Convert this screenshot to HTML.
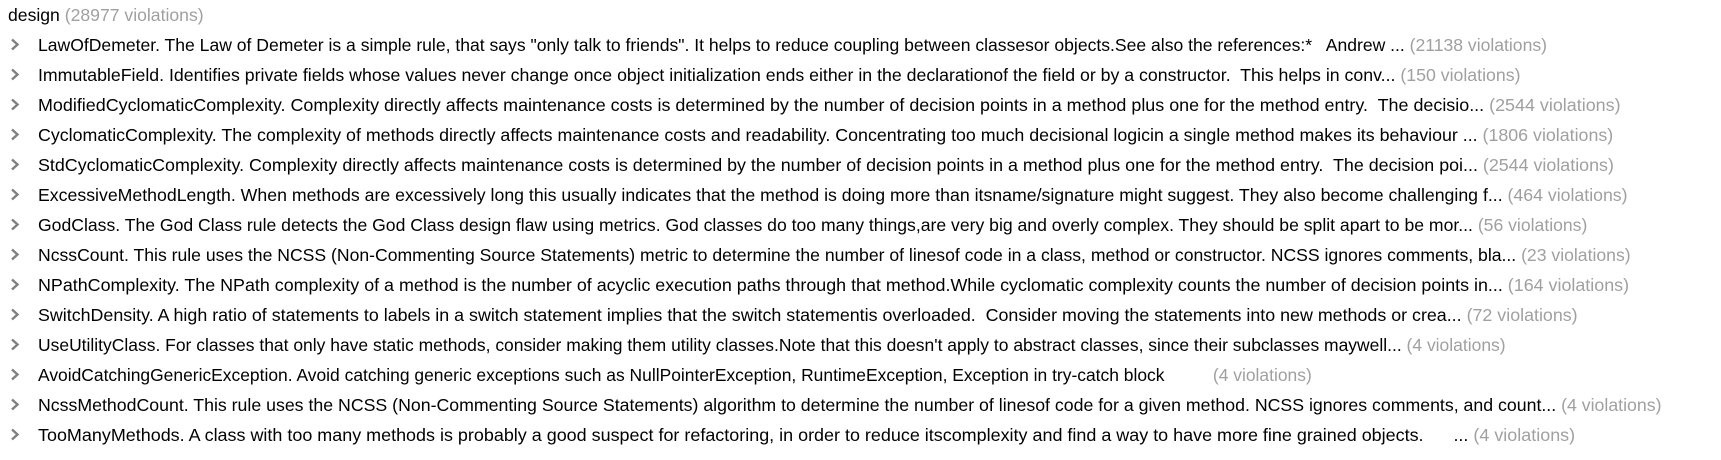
<!DOCTYPE html>
<html><head><meta charset="utf-8"><style>
html,body{margin:0;padding:0;background:#fff;width:1721px;height:460px;overflow:hidden}
body{font-family:"Liberation Sans",Arial,sans-serif;font-size:17.6px;color:#000}
.h{position:absolute;left:8px;top:4px;white-space:pre;line-height:22px}
.r{position:absolute;left:0;height:30px;line-height:30px;white-space:pre;width:1721px}
.r svg{position:absolute;left:10px;top:8px}
.r span.t{position:absolute;left:38px;transform-origin:0 50%}
.g{color:#a0a0a0}
</style></head><body>
<div class="h">design <span class="g">(28977 violations)</span></div>
<div class="r" style="top:30px"><svg width="10" height="13"><path d="M2 1.5l5.5 5-5.5 5" stroke="#808080" stroke-width="2.4" fill="none"/></svg><span class="t" style="transform:scaleX(0.998)">LawOfDemeter. The Law of Demeter is a simple rule, that says "only talk to friends". It helps to reduce coupling between classesor objects.See also the references:*   Andrew ... <span class="g">(21138 violations)</span></span></div>
<div class="r" style="top:60px"><svg width="10" height="13"><path d="M2 1.5l5.5 5-5.5 5" stroke="#808080" stroke-width="2.4" fill="none"/></svg><span class="t" style="transform:scaleX(1.007)">ImmutableField. Identifies private fields whose values never change once object initialization ends either in the declarationof the field or by a constructor.  This helps in conv... <span class="g">(150 violations)</span></span></div>
<div class="r" style="top:90px"><svg width="10" height="13"><path d="M2 1.5l5.5 5-5.5 5" stroke="#808080" stroke-width="2.4" fill="none"/></svg><span class="t" style="transform:scaleX(1.018)">ModifiedCyclomaticComplexity. Complexity directly affects maintenance costs is determined by the number of decision points in a method plus one for the method entry.  The decisio... <span class="g">(2544 violations)</span></span></div>
<div class="r" style="top:120px"><svg width="10" height="13"><path d="M2 1.5l5.5 5-5.5 5" stroke="#808080" stroke-width="2.4" fill="none"/></svg><span class="t" style="transform:scaleX(1.012)">CyclomaticComplexity. The complexity of methods directly affects maintenance costs and readability. Concentrating too much decisional logicin a single method makes its behaviour ... <span class="g">(1806 violations)</span></span></div>
<div class="r" style="top:150px"><svg width="10" height="13"><path d="M2 1.5l5.5 5-5.5 5" stroke="#808080" stroke-width="2.4" fill="none"/></svg><span class="t" style="transform:scaleX(1.015)">StdCyclomaticComplexity. Complexity directly affects maintenance costs is determined by the number of decision points in a method plus one for the method entry.  The decision poi... <span class="g">(2544 violations)</span></span></div>
<div class="r" style="top:180px"><svg width="10" height="13"><path d="M2 1.5l5.5 5-5.5 5" stroke="#808080" stroke-width="2.4" fill="none"/></svg><span class="t" style="transform:scaleX(1.006)">ExcessiveMethodLength. When methods are excessively long this usually indicates that the method is doing more than itsname/signature might suggest. They also become challenging f... <span class="g">(464 violations)</span></span></div>
<div class="r" style="top:210px"><svg width="10" height="13"><path d="M2 1.5l5.5 5-5.5 5" stroke="#808080" stroke-width="2.4" fill="none"/></svg><span class="t">GodClass. The God Class rule detects the God Class design flaw using metrics. God classes do too many things,are very big and overly complex. They should be split apart to be mor... <span class="g">(56 violations)</span></span></div>
<div class="r" style="top:240px"><svg width="10" height="13"><path d="M2 1.5l5.5 5-5.5 5" stroke="#808080" stroke-width="2.4" fill="none"/></svg><span class="t">NcssCount. This rule uses the NCSS (Non-Commenting Source Statements) metric to determine the number of linesof code in a class, method or constructor. NCSS ignores comments, bla... <span class="g">(23 violations)</span></span></div>
<div class="r" style="top:270px"><svg width="10" height="13"><path d="M2 1.5l5.5 5-5.5 5" stroke="#808080" stroke-width="2.4" fill="none"/></svg><span class="t" style="transform:scaleX(1.016)">NPathComplexity. The NPath complexity of a method is the number of acyclic execution paths through that method.While cyclomatic complexity counts the number of decision points in... <span class="g">(164 violations)</span></span></div>
<div class="r" style="top:300px"><svg width="10" height="13"><path d="M2 1.5l5.5 5-5.5 5" stroke="#808080" stroke-width="2.4" fill="none"/></svg><span class="t" style="transform:scaleX(1.014)">SwitchDensity. A high ratio of statements to labels in a switch statement implies that the switch statementis overloaded.  Consider moving the statements into new methods or crea... <span class="g">(72 violations)</span></span></div>
<div class="r" style="top:330px"><svg width="10" height="13"><path d="M2 1.5l5.5 5-5.5 5" stroke="#808080" stroke-width="2.4" fill="none"/></svg><span class="t" style="transform:scaleX(0.993)">UseUtilityClass. For classes that only have static methods, consider making them utility classes.Note that this doesn't apply to abstract classes, since their subclasses maywell... <span class="g">(4 violations)</span></span></div>
<div class="r" style="top:360px"><svg width="10" height="13"><path d="M2 1.5l5.5 5-5.5 5" stroke="#808080" stroke-width="2.4" fill="none"/></svg><span class="t" style="transform:scaleX(0.991)">AvoidCatchingGenericException. Avoid catching generic exceptions such as NullPointerException, RuntimeException, Exception in try-catch block          <span class="g">(4 violations)</span></span></div>
<div class="r" style="top:390px"><svg width="10" height="13"><path d="M2 1.5l5.5 5-5.5 5" stroke="#808080" stroke-width="2.4" fill="none"/></svg><span class="t" style="transform:scaleX(1.007)">NcssMethodCount. This rule uses the NCSS (Non-Commenting Source Statements) algorithm to determine the number of linesof code for a given method. NCSS ignores comments, and count... <span class="g">(4 violations)</span></span></div>
<div class="r" style="top:420px"><svg width="10" height="13"><path d="M2 1.5l5.5 5-5.5 5" stroke="#808080" stroke-width="2.4" fill="none"/></svg><span class="t" style="transform:scaleX(1.020)">TooManyMethods. A class with too many methods is probably a good suspect for refactoring, in order to reduce itscomplexity and find a way to have more fine grained objects.      ... <span class="g">(4 violations)</span></span></div>
</body></html>
